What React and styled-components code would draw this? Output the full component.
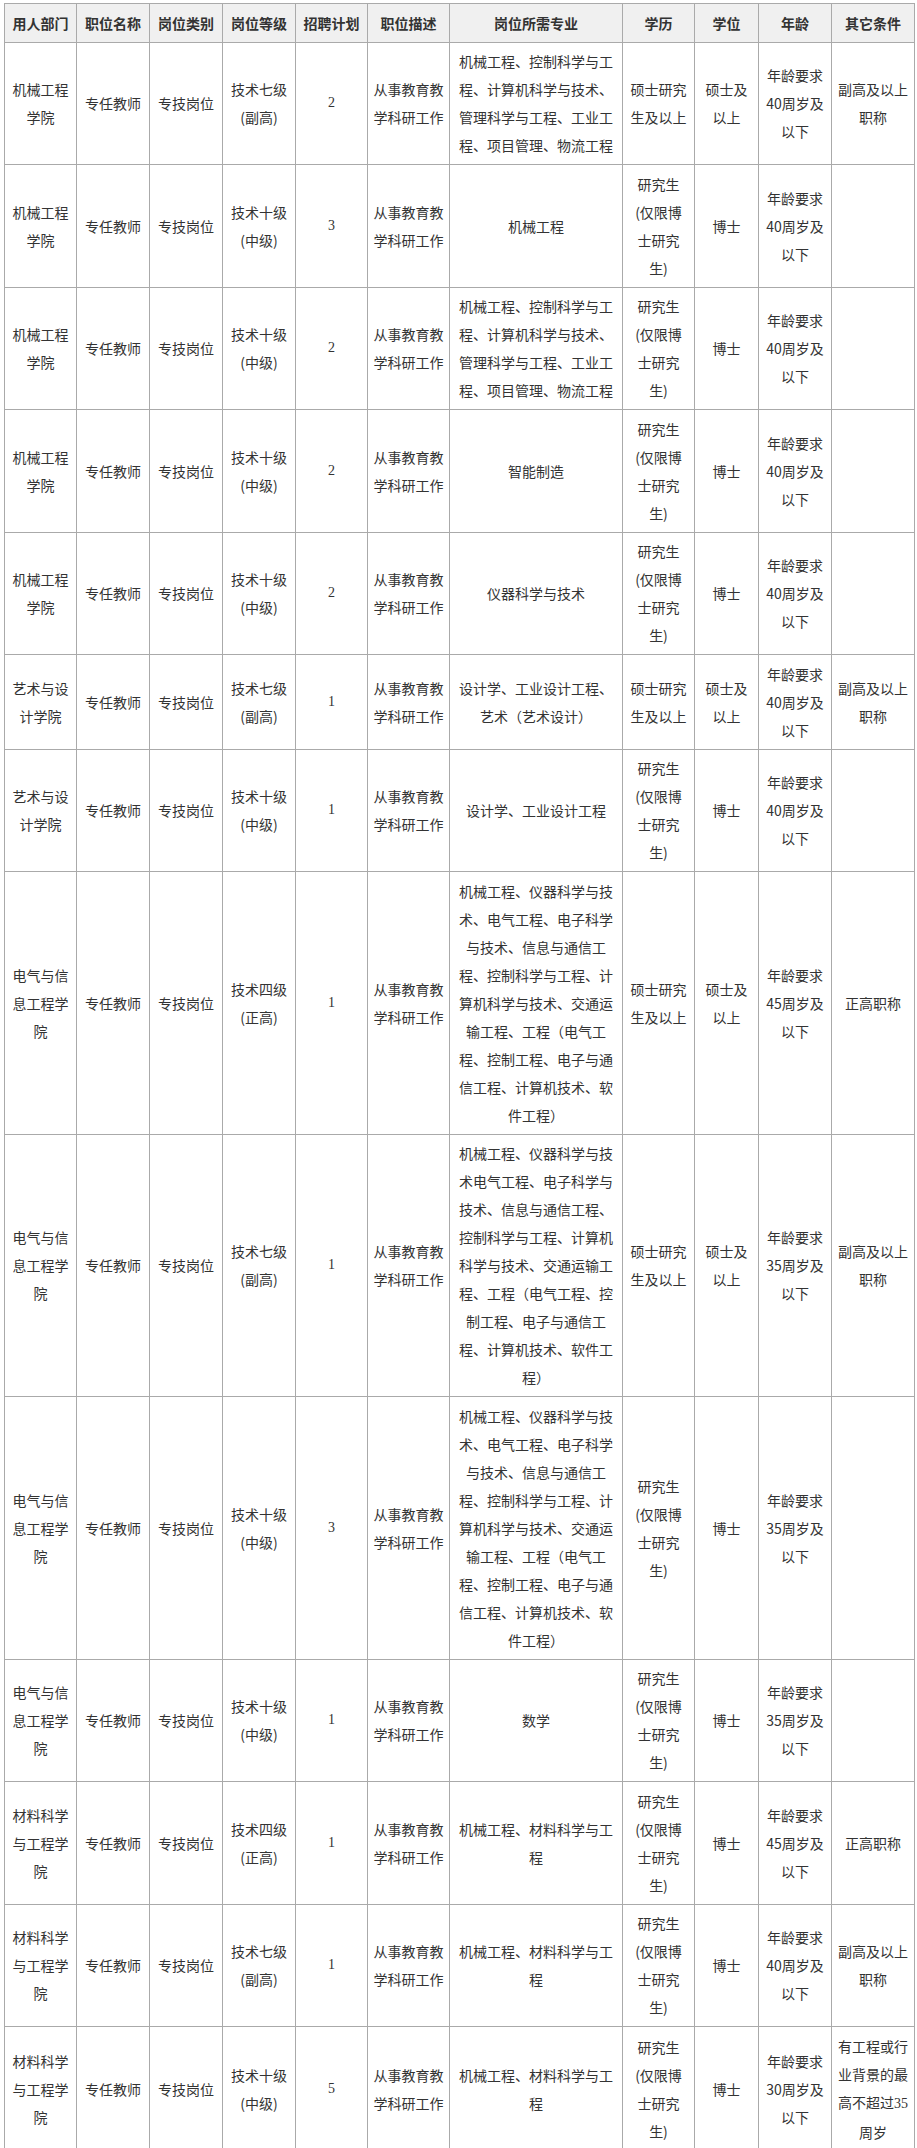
import React from "react";
import styled, { createGlobalStyle } from "styled-components";

const GlobalStyle = createGlobalStyle`
  html, body {
    margin: 0;
    padding: 0;
    background: #ffffff;
  }
  body {
    font-family: "Noto Sans CJK SC", "Noto Sans", sans-serif;
    color: #333333;
  }
`;

const Page = styled.div`
  padding: 3px 0 0 4px;
`;

const Table = styled.table`
  width: 910px;
  table-layout: fixed;
  border-collapse: collapse;
  font-size: 14px;
  line-height: 28px;
  color: #333333;
`;

const Col = styled.col`
  width: ${(p) => p.$w}px;
`;

const HeadCell = styled.th`
  background: #f0f0f0;
  border: 1px solid #aaaaaa;
  padding: 4.75px 5px;
  font-weight: 700;
  text-align: center;
  vertical-align: middle;
  white-space: nowrap;
`;

const Cell = styled.td`
  border: 1px solid #aaaaaa;
  padding: 4.75px ${(p) => (p.$tight ? 6 : 5)}px;
  text-align: center;
  vertical-align: middle;
  word-break: normal;
  line-break: strict;
  font-family: ${(p) =>
    p.$serif
      ? `"Liberation Serif", "Noto Sans CJK SC", serif`
      : `"Noto Sans CJK SC", "Noto Sans", sans-serif`};
`;

const Num = styled.span`
  font-family: "Liberation Serif", serif;
`;

const widths = [72, 73, 73, 73, 72, 82, 173, 72, 64, 73, 83];

const headers = [
  "用人部门",
  "职位名称",
  "岗位类别",
  "岗位等级",
  "招聘计划",
  "职位描述",
  "岗位所需专业",
  "学历",
  "学位",
  "年龄",
  "其它条件",
];

const MAJOR_MECH =
  "机械工程、控制科学与工程、计算机科学与技术、管理科学与工程、工业工程、项目管理、物流工程";
const MAJOR_ELEC_A =
  "机械工程、仪器科学与技术、电气工程、电子科学与技术、信息与通信工程、控制科学与工程、计算机科学与技术、交通运输工程、工程（电气工程、控制工程、电子与通信工程、计算机技术、软件工程）";
const MAJOR_ELEC_B =
  "机械工程、仪器科学与技术电气工程、电子科学与技术、信息与通信工程、控制科学与工程、计算机科学与技术、交通运输工程、工程（电气工程、控制工程、电子与通信工程、计算机技术、软件工程）";
const MAJOR_MAT = "机械工程、材料科学与工程";

const MASTER = "硕士研究生及以上";
const PHD = "研究生(仅限博士研究生)";

const rows = [
  ["机械工程学院", "技术七级(副高)", "2", MAJOR_MECH, MASTER, "硕士及以上", "40", "副高及以上职称"],
  ["机械工程学院", "技术十级(中级)", "3", "机械工程", PHD, "博士", "40", ""],
  ["机械工程学院", "技术十级(中级)", "2", MAJOR_MECH, PHD, "博士", "40", ""],
  ["机械工程学院", "技术十级(中级)", "2", "智能制造", PHD, "博士", "40", ""],
  ["机械工程学院", "技术十级(中级)", "2", "仪器科学与技术", PHD, "博士", "40", ""],
  ["艺术与设计学院", "技术七级(副高)", "1", "设计学、工业设计工程、艺术（艺术设计）", MASTER, "硕士及以上", "40", "副高及以上职称"],
  ["艺术与设计学院", "技术十级(中级)", "1", "设计学、工业设计工程", PHD, "博士", "40", ""],
  ["电气与信息工程学院", "技术四级(正高)", "1", MAJOR_ELEC_A, MASTER, "硕士及以上", "45", "正高职称"],
  ["电气与信息工程学院", "技术七级(副高)", "1", MAJOR_ELEC_B, MASTER, "硕士及以上", "35", "副高及以上职称"],
  ["电气与信息工程学院", "技术十级(中级)", "3", MAJOR_ELEC_A, PHD, "博士", "35", ""],
  ["电气与信息工程学院", "技术十级(中级)", "1", "数学", PHD, "博士", "35", ""],
  ["材料科学与工程学院", "技术四级(正高)", "1", MAJOR_MAT, PHD, "博士", "45", "正高职称"],
  ["材料科学与工程学院", "技术七级(副高)", "1", MAJOR_MAT, PHD, "博士", "40", "副高及以上职称"],
  ["材料科学与工程学院", "技术十级(中级)", "5", MAJOR_MAT, PHD, "博士", "30", "BG"],
];

function Other({ value }) {
  if (value === "BG") {
    return (
      <>
        有工程或行业背景的最高不超过<Num>35</Num>周岁
      </>
    );
  }
  return <>{value}</>;
}

export default function App() {
  return (
    <>
      <GlobalStyle />
      <Page>
        <Table>
          <colgroup>
            {widths.map((w, i) => (
              <Col key={i} $w={w} />
            ))}
          </colgroup>
          <thead>
            <tr>
              {headers.map((h) => (
                <HeadCell key={h}>{h}</HeadCell>
              ))}
            </tr>
          </thead>
          <tbody>
            {rows.map((r, i) => (
              <tr key={i}>
                <Cell>{r[0]}</Cell>
                <Cell>专任教师</Cell>
                <Cell>专技岗位</Cell>
                <Cell>{r[1]}</Cell>
                <Cell $serif>{r[2]}</Cell>
                <Cell>从事教育教学科研工作</Cell>
                <Cell>{r[3]}</Cell>
                <Cell $tight>{r[4]}</Cell>
                <Cell>{r[5]}</Cell>
                <Cell>{`年龄要求${r[6]}周岁及以下`}</Cell>
                <Cell>
                  <Other value={r[7]} />
                </Cell>
              </tr>
            ))}
          </tbody>
        </Table>
      </Page>
    </>
  );
}
